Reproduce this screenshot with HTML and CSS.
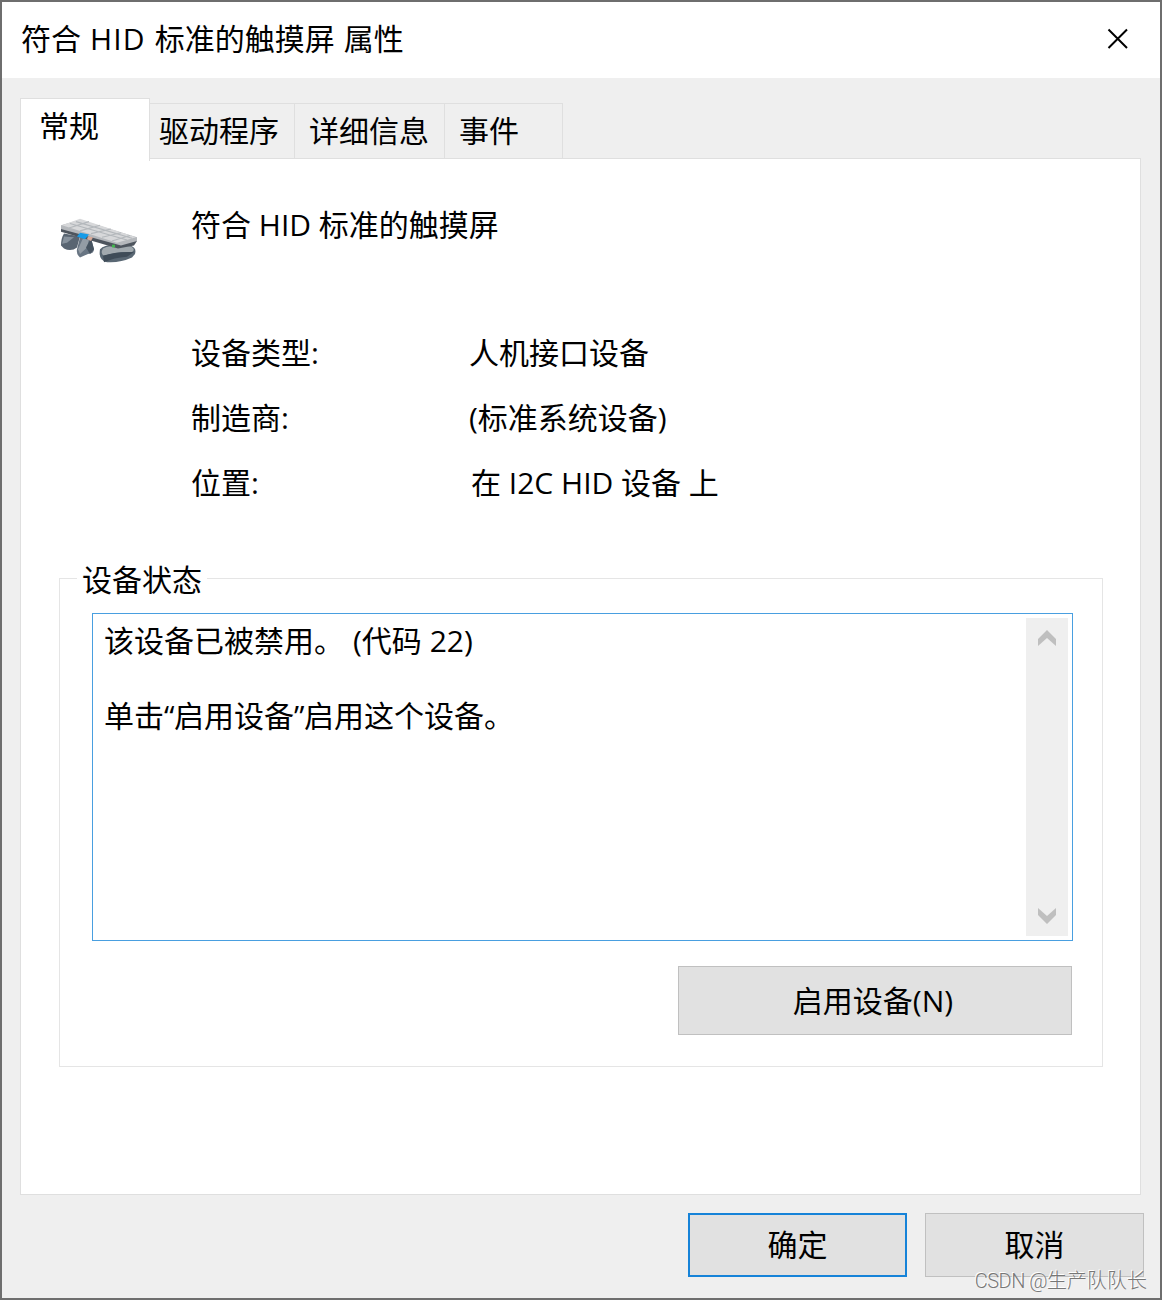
FILE: index.html
```html
<!DOCTYPE html>
<html lang="zh-CN">
<head>
<meta charset="utf-8">
<title>符合 HID 标准的触摸屏 属性</title>
<link rel="stylesheet" href="styles.css">
</head>
<body>
<div class="dialog">
  <header class="titlebar">
    <span class="title">符合 <span class="title-latin">HID</span> 标准的触摸屏 属性</span>
    <svg class="close" width="22" height="22" viewBox="0 0 22 22"><path d="M1.5 1.5 20 20M20 1.5 1.5 20" stroke="#000" stroke-width="2" fill="none"/></svg>
  </header>
  <nav class="tabs">
    <div class="tab active">常规</div>
    <div class="tab driver">驱动程序</div>
    <div class="tab details">详细信息</div>
    <div class="tab events">事件</div>
  </nav>
  <main class="panel">
    <div class="device">
      <svg class="device-icon" width="78" height="48" viewBox="0 0 78 52" preserveAspectRatio="none">
        <path d="M4 18 20 21 17 33Q11 38 4 34L1 31Q1 23 4 18Z" fill="#596572"/>
        <path d="M4 21 14 22 7 28 2 29Z" fill="#87929d"/>
        <path d="M20 22 31 23 34 35Q34 40 28 40L20 44Q16 40 17 35Z" fill="#687583"/>
        <path d="M23 23 29 24 27 33 20 40 18 35Z" fill="#939ca5"/>
        <path d="M31 23 34 35 30 40 26 33Z" fill="#475461"/>
        <path d="M40 35Q44 30 54 30L70 31Q77 33 75 40L72 44Q60 50 47 49Q38 47 40 35Z" fill="#596773"/>
        <path d="M43 34Q54 29 71 32Q76 35 72 38Q57 37 44 42Q40 39 43 34Z" fill="#a1a9ae"/>
        <path d="M43 42Q56 37 74 38L67 43Q54 44 44 49Z" fill="#3f4c58"/>
        <path d="M1 10 77 26 74 31 58 34 1 16Z" fill="#4e555e"/>
        <path d="M1 9 20 3 77 22 77 26 61 31 1 13Z" fill="#b5b8bc"/>
        <path d="M2 9 20 2 76 22 57 28Z" fill="#d7d8da"/>
        <path d="M10 7 67 25M16 5 72 23M9 12 29 5M20 15 40 9M31 18 51 13M42 22 61 17M52 26 70 20" stroke="#b4b8bc" stroke-width="1.2"/>
        <path d="M20 17 29 19 25 24 17 21Z" fill="#159be8"/>
        <path d="M28 21 33 22 31 26 27 24Z" fill="#d7aa99"/>
        <path d="M52 30h3v3h-3z" fill="#42b64d"/>
      </svg>
      <div class="device-name">符合 HID 标准的触摸屏</div>
    </div>
    <div class="facts">
      <span>设备类型:</span><span>人机接口设备</span>
      <span>制造商:</span><span>(标准系统设备)</span>
      <span>位置:</span><span class="location">在 I2C HID 设备 上</span>
    </div>
    <section class="status">
      <div class="legend">设备状态</div>
      <div class="message">
        <div class="message-text"><p>该设备已被禁用。<span class="code">(代码 22)</span></p><p>单击<span class="quote">“</span>启用设备<span class="quote">”</span>启用这个设备。</p></div>
        <div class="scrollbar">
          <svg width="20" height="18" viewBox="0 0 20 18"><path d="M10 1 19 10V17L10 9 1 17V10Z" fill="#bfbfbf"/></svg>
          <svg width="20" height="18" viewBox="0 0 20 18"><path d="M10 17 19 8V1L10 9 1 1V8Z" fill="#bfbfbf"/></svg>
        </div>
      </div>
      <div class="button enable">启用设备(N)</div>
    </section>
  </main>
  <footer class="actions">
    <div class="button ok">确定</div>
    <div class="button">取消</div>
  </footer>
  <div class="watermark"><span class="handle">CSDN @</span>生产队队长</div>
</div>
</body>
</html>
```
FILE: styles.css
```css
* { box-sizing: border-box; }
body {
  margin: 0;
  font: 30px/36px "Open Sans", "Noto Sans CJK SC", sans-serif;
  color: #000;
}
p { margin: 0; }
.dialog {
  position: relative;
  width: 1162px;
  height: 1300px;
  border: 2px solid #6e6e6e;
  background: #efefef;
  overflow: hidden;
  white-space: nowrap;
}
.titlebar {
  height: 76px;
  padding: 0 31px 0 19px;
  display: flex;
  align-items: center;
  justify-content: space-between;
  background: #fff;
}
.title { margin-top: -2px; word-spacing: 1.3px; }
.title-latin { letter-spacing: 1.1px; }
.close { margin-top: -3px; }
.tabs {
  display: flex;
  align-items: flex-end;
  height: 80px;
  padding-left: 18px;
}
.tab {
  height: 55px;
  border: 1px solid #dfdfdf;
  border-width: 1px 1px 0 0;
  padding-top: 9px;
}
.tab.active {
  width: 130px;
  height: 63px;
  border-left-width: 1px;
  padding: 9px 0 0 18px;
  margin-bottom: -3px;
  background: #fff;
  z-index: 1;
}
.driver { width: 145px; padding-left: 9px; }
.details { width: 150px; padding-left: 14px; }
.events { width: 118px; padding-left: 14px; }
.panel {
  width: 1121px;
  height: 1037px;
  margin-left: 18px;
  border: 1px solid #dfdfdf;
  background: #fff;
  padding: 48px 38px 0 38px;
}
.device { display: flex; height: 113px; }
.device-icon { margin: 10px 54px 0 1px; }
.device-name { margin-left: -1px; }
.facts {
  display: grid;
  grid-template-columns: 278px auto;
  grid-auto-rows: 65px;
  align-items: center;
  height: 258px;
  align-content: start;
  padding-left: 132px;
}
.location { padding-left: 2px; }
.status {
  width: 1044px;
  height: 489px;
  border: 1px solid #e5e5e5;
  padding: 0 30px 0 32px;
}
.legend {
  width: 130px;
  height: 36px;
  margin: -17px 0 15px -15px;
  padding-left: 5px;
  background: #fff;
}
.message {
  display: flex;
  justify-content: space-between;
  width: 981px;
  height: 328px;
  border: 1px solid #499fe0;
  padding: 4px 4px 4px 11px;
}
.message-text { padding-top: 4px; }
.message-text p { height: 75px; line-height: 38px; }
.code { margin-left: 9px; }
.quote { letter-spacing: -0.5px; }
.scrollbar {
  display: flex;
  flex-direction: column;
  align-items: center;
  justify-content: space-between;
  width: 42px;
  padding: 11px 1px 11px 0;
  background: #efefef;
}
.button {
  width: 219px;
  height: 64px;
  display: flex;
  align-items: center;
  justify-content: center;
  border: 1px solid #c0c0c0;
  background: #e1e1e1;
}
.enable {
  width: 394px;
  height: 69px;
  margin: 25px 0 0 auto;
  padding-right: 4px;
}
.ok { border: 2px solid #1683d8; }
.actions {
  display: flex;
  justify-content: flex-end;
  gap: 18px;
  padding: 18px 16px 0 0;
}
.watermark {
  position: absolute;
  right: 13px;
  bottom: 4px;
  font-family: Roboto, "Noto Sans CJK SC", sans-serif;
  font-size: 20px;
  font-weight: 300;
  line-height: 26px;
  color: #777;
  text-shadow: -1px -1px #fff;
}
.handle { letter-spacing: -0.5px; }
```
